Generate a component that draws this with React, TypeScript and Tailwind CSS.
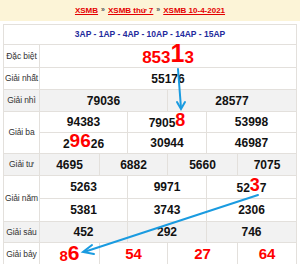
import React from "react";

const cell = "border-r border-b border-[#e3e0dc] flex items-center justify-center";
const lab = "border-r border-b border-[#e3e0dc] flex items-center justify-center whitespace-nowrap text-[8.5px] text-[#333] tracking-[-0.1px]";
const num = "font-bold text-[12px] text-[#111]";
const red = "text-[#ff0000]";

export default function App() {
  const f = { fontFamily: '"Liberation Sans", Arial, sans-serif' };
  return (
    <div className="relative w-[300px] h-[264px] overflow-hidden bg-white" style={f}>
      <div className="h-[21px] bg-[#fcf4d7] flex items-center justify-center text-[8px] font-bold gap-[3px]">
        <span className="text-[#e40000] underline">XSMB</span>
        <span className="text-[#555] text-[7px]">»</span>
        <span className="text-[#e40000] underline">XSMB thứ 7</span>
        <span className="text-[#555] text-[7px]">»</span>
        <span className="text-[#e40000] underline">XSMB 10-4-2021</span>
      </div>
      <div className="mt-[3px] ml-[3px] w-[294px] border-l border-t border-[#e3e0dc] grid grid-cols-[36px_60px_28px_40px_39px_31px_1fr] grid-rows-[20px_23px_22px_22px_21px_21px_22px_23px_23px_21px_24px]">
        <div className={`${cell} col-span-7 text-[8.5px] font-bold text-[#1f2a9c]`}>3AP - 1AP - 4AP - 10AP - 14AP - 15AP</div>

        <div className={lab}>Đặc biệt</div>
        <div className={`${cell} col-span-6 font-bold ${red} items-end pb-[1px]`}>
          <span className="text-[17px] leading-none">853</span>
          <span className="text-[25px] leading-none">1</span>
          <span className="text-[17px] leading-none">3</span>
        </div>

        <div className={lab}>Giải nhất</div>
        <div className={`${cell} col-span-6 ${num}`}>55176</div>

        <div className={`${lab} bg-[#f2f2f2]`}>Giải nhì</div>
        <div className={`${cell} bg-[#f2f2f2] col-span-3 ${num}`}>79036</div>
        <div className={`${cell} bg-[#f2f2f2] col-span-3 ${num}`}>28577</div>

        <div className={`${lab} row-span-2`}>Giải ba</div>
        <div className={`${cell} col-span-2 ${num}`}>94383</div>
        <div className={`${cell} col-span-2 ${num} items-end pb-[3px]`}>
          <span className="leading-none">7905</span>
          <span className={`${red} text-[18px] leading-none`}>8</span>
        </div>
        <div className={`${cell} col-span-2 ${num}`}>53998</div>
        <div className={`${cell} col-span-2 ${num} items-end pb-[3px]`}>
          <span className="leading-none">2</span>
          <span className={`${red} text-[19px] leading-none`}>96</span>
          <span className="leading-none">26</span>
        </div>
        <div className={`${cell} col-span-2 ${num}`}>30944</div>
        <div className={`${cell} col-span-2 ${num}`}>46987</div>

        <div className={`${lab} bg-[#f2f2f2]`}>Giải tư</div>
        <div className={`${cell} bg-[#f2f2f2] ${num}`}>4695</div>
        <div className={`${cell} bg-[#f2f2f2] col-span-2 ${num}`}>6882</div>
        <div className={`${cell} bg-[#f2f2f2] col-span-2 ${num}`}>5660</div>
        <div className={`${cell} bg-[#f2f2f2] ${num}`}>7075</div>

        <div className={`${lab} row-span-2`}>Giải năm</div>
        <div className={`${cell} col-span-2 ${num}`}>5263</div>
        <div className={`${cell} col-span-2 ${num}`}>9971</div>
        <div className={`${cell} col-span-2 ${num} items-end pb-[4px]`}>
          <span className="leading-none">52</span>
          <span className={`${red} text-[18px] leading-none`}>3</span>
          <span className="leading-none">7</span>
        </div>
        <div className={`${cell} col-span-2 ${num}`}>5381</div>
        <div className={`${cell} col-span-2 ${num}`}>3743</div>
        <div className={`${cell} col-span-2 ${num}`}>2306</div>

        <div className={`${lab} bg-[#f2f2f2]`}>Giải sáu</div>
        <div className={`${cell} bg-[#f2f2f2] col-span-2 ${num}`}>452</div>
        <div className={`${cell} bg-[#f2f2f2] col-span-2 ${num}`}>292</div>
        <div className={`${cell} bg-[#f2f2f2] col-span-2 ${num}`}>746</div>

        <div className={lab}>Giải bảy</div>
        <div className={`${cell} font-bold ${red} items-end pb-[3px]`}>
          <span className="text-[15px] leading-none">8</span>
          <span className="text-[21px] leading-none">6</span>
        </div>
        <div className={`${cell} col-span-2 font-bold text-[15px] ${red}`}>54</div>
        <div className={`${cell} col-span-2 font-bold text-[15px] ${red}`}>27</div>
        <div className={`${cell} font-bold text-[15px] ${red}`}>64</div>
      </div>
      <svg className="absolute left-0 top-0 pointer-events-none" width="300" height="264" viewBox="0 0 300 264">
        <g stroke="#1a9be0" strokeWidth="2" fill="none" strokeLinecap="round">
          <line x1="178" y1="69" x2="181" y2="108" />
          <polyline points="177,102 181,109 185,102" />
          <line x1="258" y1="195" x2="84" y2="252" />
          <polyline points="92,245 83,252 94,254" />
        </g>
      </svg>
    </div>
  );
}
